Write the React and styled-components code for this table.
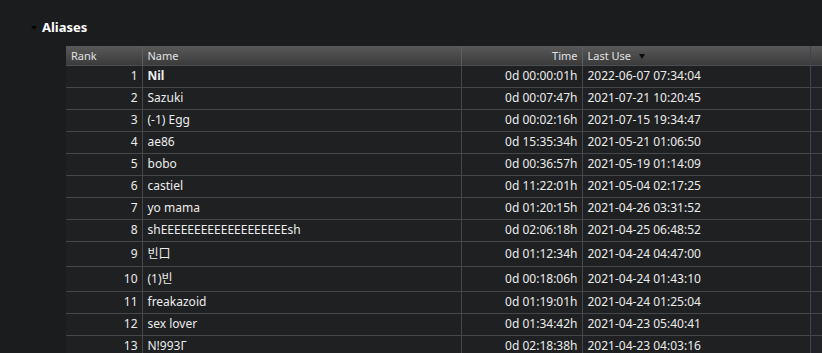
import React from 'react';
import styled, { createGlobalStyle } from 'styled-components';

const GlobalStyle = createGlobalStyle`
  html, body {
    margin: 0;
    padding: 0;
    background: #1b1c1e;
    overflow: hidden;
  }
  body {
    font-family: "Noto Sans", "Open Sans", "Noto Sans CJK KR", sans-serif;
    color: #ececec;
  }
`;

const Page = styled.div`
  padding: 19px 0 0 31px;
  width: 822px;
  height: 353px;
  box-sizing: border-box;
  overflow: hidden;
`;

const SectionTitle = styled.div`
  display: flex;
  align-items: center;
  gap: 5px;
  height: 16px;
  font-size: 13px;
  font-weight: bold;
  color: #ffffff;
`;

const Caret = styled.span`
  width: 0;
  height: 0;
  border-left: 3.5px solid transparent;
  border-right: 3.5px solid transparent;
  border-top: 4px solid #050505;
  margin-top: 2px;
`;

const Table = styled.table`
  margin: 11px 0 0 35px;
  border-collapse: collapse;
  table-layout: fixed;
  width: 800px;
  background: #1f2022;
`;

const HeadCell = styled.th`
  height: 19px;
  padding: 0 4px 0 5px;
  font-size: 11px;
  font-weight: normal;
  color: #e2e2e2;
  text-align: ${(p) => (p.$right ? 'right' : 'left')};
  background: linear-gradient(#595959, #3b3b3b);
  border-left: 1px solid #5c5f63;
  border-bottom: 1px solid #4b4e53;
  white-space: nowrap;
  &:first-child {
    border-left: none;
  }
  &:last-child {
    border-left-color: #3d4650;
  }
`;

const SortArrow = styled.span`
  display: inline-block;
  width: 0;
  height: 0;
  margin-left: 8px;
  border-left: 3px solid transparent;
  border-right: 3px solid transparent;
  border-top: 5px solid #0c0c0c;
  vertical-align: 1px;
`;

const Row = styled.tr`
  border-bottom: 1px solid #44474c;
`;

const Cell = styled.td`
  padding: ${(p) => (p.$tall ? '3px 4px 3px 5px' : '2px 4px 3px 5px')};
  line-height: ${(p) => (p.$tall ? '18px' : '16px')};
  font-size: 12px;
  font-weight: ${(p) => (p.$bold ? 'bold' : 'normal')};
  text-align: ${(p) => (p.$right ? 'right' : 'left')};
  border-left: 1px solid #44474c;
  white-space: nowrap;
  overflow: hidden;
  &:first-child {
    border-left: none;
  }
  &:last-child {
    border-left-color: #3d4650;
    background: #222326;
  }
`;

const aliases = [
  { name: 'Nil', time: '0d 00:00:01h', last: '2022-06-07 07:34:04', bold: true },
  { name: 'Sazuki', time: '0d 00:07:47h', last: '2021-07-21 10:20:45' },
  { name: '(-1) Egg', time: '0d 00:02:16h', last: '2021-07-15 19:34:47' },
  { name: 'ae86', time: '0d 15:35:34h', last: '2021-05-21 01:06:50' },
  { name: 'bobo', time: '0d 00:36:57h', last: '2021-05-19 01:14:09' },
  { name: 'castiel', time: '0d 11:22:01h', last: '2021-05-04 02:17:25' },
  { name: 'yo mama', time: '0d 01:20:15h', last: '2021-04-26 03:31:52' },
  { name: 'shEEEEEEEEEEEEEEEEEEEsh', time: '0d 02:06:18h', last: '2021-04-25 06:48:52' },
  { name: '빈口', time: '0d 01:12:34h', last: '2021-04-24 04:47:00', tall: true },
  { name: '(1)빈', time: '0d 00:18:06h', last: '2021-04-24 01:43:10', tall: true },
  { name: 'freakazoid', time: '0d 01:19:01h', last: '2021-04-24 01:25:04' },
  { name: 'sex lover', time: '0d 01:34:42h', last: '2021-04-23 05:40:41' },
  { name: 'N!993Г', time: '0d 02:18:38h', last: '2021-04-23 04:03:16' },
];

export default function App() {
  return (
    <>
      <GlobalStyle />
      <Page>
        <SectionTitle>
          <Caret />
          Aliases
        </SectionTitle>
        <Table>
          <colgroup>
            <col style={{ width: 76 }} />
            <col style={{ width: 319 }} />
            <col style={{ width: 121 }} />
            <col style={{ width: 228 }} />
            <col style={{ width: 56 }} />
          </colgroup>
          <thead>
            <tr>
              <HeadCell>Rank</HeadCell>
              <HeadCell>Name</HeadCell>
              <HeadCell $right>Time</HeadCell>
              <HeadCell>
                Last Use
                <SortArrow />
              </HeadCell>
              <HeadCell />
            </tr>
          </thead>
          <tbody>
            {aliases.map((a, i) => (
              <Row key={i}>
                <Cell $right $tall={a.tall}>{i + 1}</Cell>
                <Cell $bold={a.bold} $tall={a.tall}>{a.name}</Cell>
                <Cell $right $tall={a.tall}>{a.time}</Cell>
                <Cell $tall={a.tall}>{a.last}</Cell>
                <Cell $tall={a.tall} />
              </Row>
            ))}
          </tbody>
        </Table>
      </Page>
    </>
  );
}
